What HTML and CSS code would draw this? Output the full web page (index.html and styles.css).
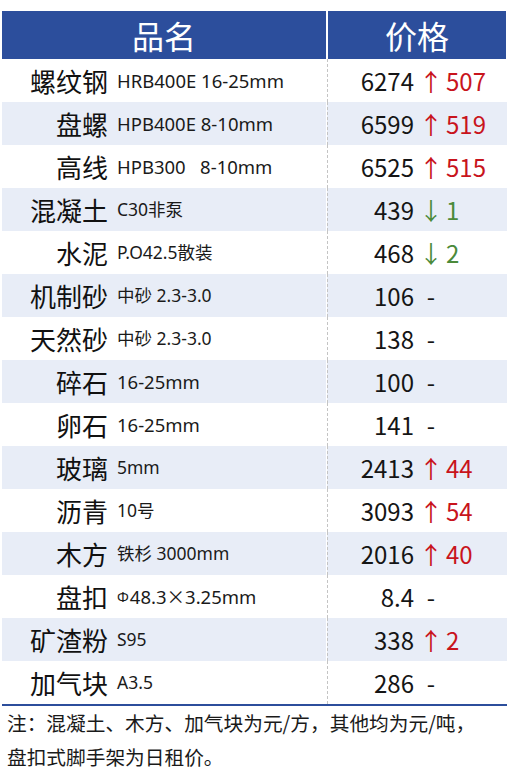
FILE: index.html
```html
<!DOCTYPE html>
<html lang="zh-CN">
<head>
<meta charset="utf-8">
<link rel="stylesheet" href="styles.css">
</head>
<body>
<div class="sheet">
  <div class="head">
    <div class="hcell hname">品名</div>
    <div class="hcell hprice">价格</div>
  </div>
  <div class="rows">
    <div class="row"><div class="name"><span class="n">螺纹钢</span><span class="s">HRB400E 16-25mm</span></div><div class="price"><span class="num">6274</span><span class="arr up">↑</span><span class="chg up">507</span></div></div>
    <div class="row"><div class="name"><span class="n">盘螺</span><span class="s">HPB400E 8-10mm</span></div><div class="price"><span class="num">6599</span><span class="arr up">↑</span><span class="chg up">519</span></div></div>
    <div class="row"><div class="name"><span class="n">高线</span><span class="s">HPB300&nbsp;&nbsp;&nbsp;8-10mm</span></div><div class="price"><span class="num">6525</span><span class="arr up">↑</span><span class="chg up">515</span></div></div>
    <div class="row"><div class="name"><span class="n">混凝土</span><span class="s sm">C30非泵</span></div><div class="price"><span class="num">439</span><span class="arr down">↓</span><span class="chg down">1</span></div></div>
    <div class="row"><div class="name"><span class="n">水泥</span><span class="s sm">P.O42.5散装</span></div><div class="price"><span class="num">468</span><span class="arr down">↓</span><span class="chg down">2</span></div></div>
    <div class="row"><div class="name"><span class="n">机制砂</span><span class="s sm">中砂 2.3-3.0</span></div><div class="price"><span class="num">106</span><span class="arr">-</span></div></div>
    <div class="row"><div class="name"><span class="n">天然砂</span><span class="s sm">中砂 2.3-3.0</span></div><div class="price"><span class="num">138</span><span class="arr">-</span></div></div>
    <div class="row"><div class="name"><span class="n">碎石</span><span class="s">16-25mm</span></div><div class="price"><span class="num">100</span><span class="arr">-</span></div></div>
    <div class="row"><div class="name"><span class="n">卵石</span><span class="s">16-25mm</span></div><div class="price"><span class="num">141</span><span class="arr">-</span></div></div>
    <div class="row"><div class="name"><span class="n">玻璃</span><span class="s sm">5mm</span></div><div class="price"><span class="num">2413</span><span class="arr up">↑</span><span class="chg up">44</span></div></div>
    <div class="row"><div class="name"><span class="n">沥青</span><span class="s sm">10号</span></div><div class="price"><span class="num">3093</span><span class="arr up">↑</span><span class="chg up">54</span></div></div>
    <div class="row"><div class="name"><span class="n">木方</span><span class="s sm">铁杉 3000mm</span></div><div class="price"><span class="num">2016</span><span class="arr up">↑</span><span class="chg up">40</span></div></div>
    <div class="row"><div class="name"><span class="n">盘扣</span><span class="s"><span class="phi">Φ</span>48.3<span class="cjk">×</span>3.25mm</span></div><div class="price"><span class="num">8.4</span><span class="arr">-</span></div></div>
    <div class="row"><div class="name"><span class="n">矿渣粉</span><span class="s sm">S95</span></div><div class="price"><span class="num">338</span><span class="arr up">↑</span><span class="chg up">2</span></div></div>
    <div class="row"><div class="name"><span class="n">加气块</span><span class="s sm">A3.5</span></div><div class="price"><span class="num">286</span><span class="arr">-</span></div></div>
  </div>
  <div class="note">注：混凝土、木方、加气块为元/方，其他均为元/吨，<br>盘扣式脚手架为日租价。</div>
</div>
</body>
</html>
```

FILE: styles.css
```css
html, body {
  margin: 0;
  padding: 0;
  background: #ffffff;
}
body {
  font-family: "Noto Sans CJK SC", "Noto Sans", sans-serif;
  color: #151515;
}
.sheet {
  width: 505px;
  margin: 11px 0 0 2px;
}
.head {
  display: flex;
  height: 48px;
}
.hcell {
  background: #2c4e9c;
  color: #ffffff;
  font-size: 32px;
  line-height: 48px;
  text-align: center;
}
.hname {
  width: 324px;
}
.hprice {
  flex: 1;
  margin-left: 2px;
  margin-right: 1px;
}
.rows {
  border-bottom: 2px solid #2c4e9c;
}
.row {
  display: flex;
  height: 43px;
}
.row:nth-child(even) .name,
.row:nth-child(even) .price {
  background: #e8edf7;
}
.name {
  width: 324px;
  display: flex;
  align-items: center;
}
.n {
  width: 106px;
  text-align: right;
  font-size: 26px;
  line-height: 43px;
  flex: none;
  color: #111111;
}
.s {
  margin-left: 9px;
  font-family: "Noto Sans", "Noto Sans CJK SC", sans-serif;
  font-size: 18.5px;
  line-height: 43px;
  color: #1a1a1a;
}
.s.sm {
  font-size: 17.5px;
}
.phi {
  font-size: 14px;
  margin-right: 1px;
  vertical-align: 2px;
}
.cjk {
  font-family: "Noto Sans CJK SC", sans-serif;
}
.price {
  flex: 1;
  margin-left: 1px;
  border-left: 1px dashed #c4c4c4;
  display: flex;
  align-items: center;
  font-size: 24px;
  line-height: 43px;
}
.num {
  width: 86px;
  text-align: right;
  flex: none;
}
.arr {
  display: inline-block;
  width: 24px;
  margin-left: 5px;
  text-align: center;
}
.chg {
  margin-left: 3px;
}
.up {
  color: #c8141c;
}
.down {
  color: #4b8a3a;
}
.note {
  font-size: 19.7px;
  line-height: 34px;
  padding-left: 5px;
  color: #1a1a1a;
}
```
